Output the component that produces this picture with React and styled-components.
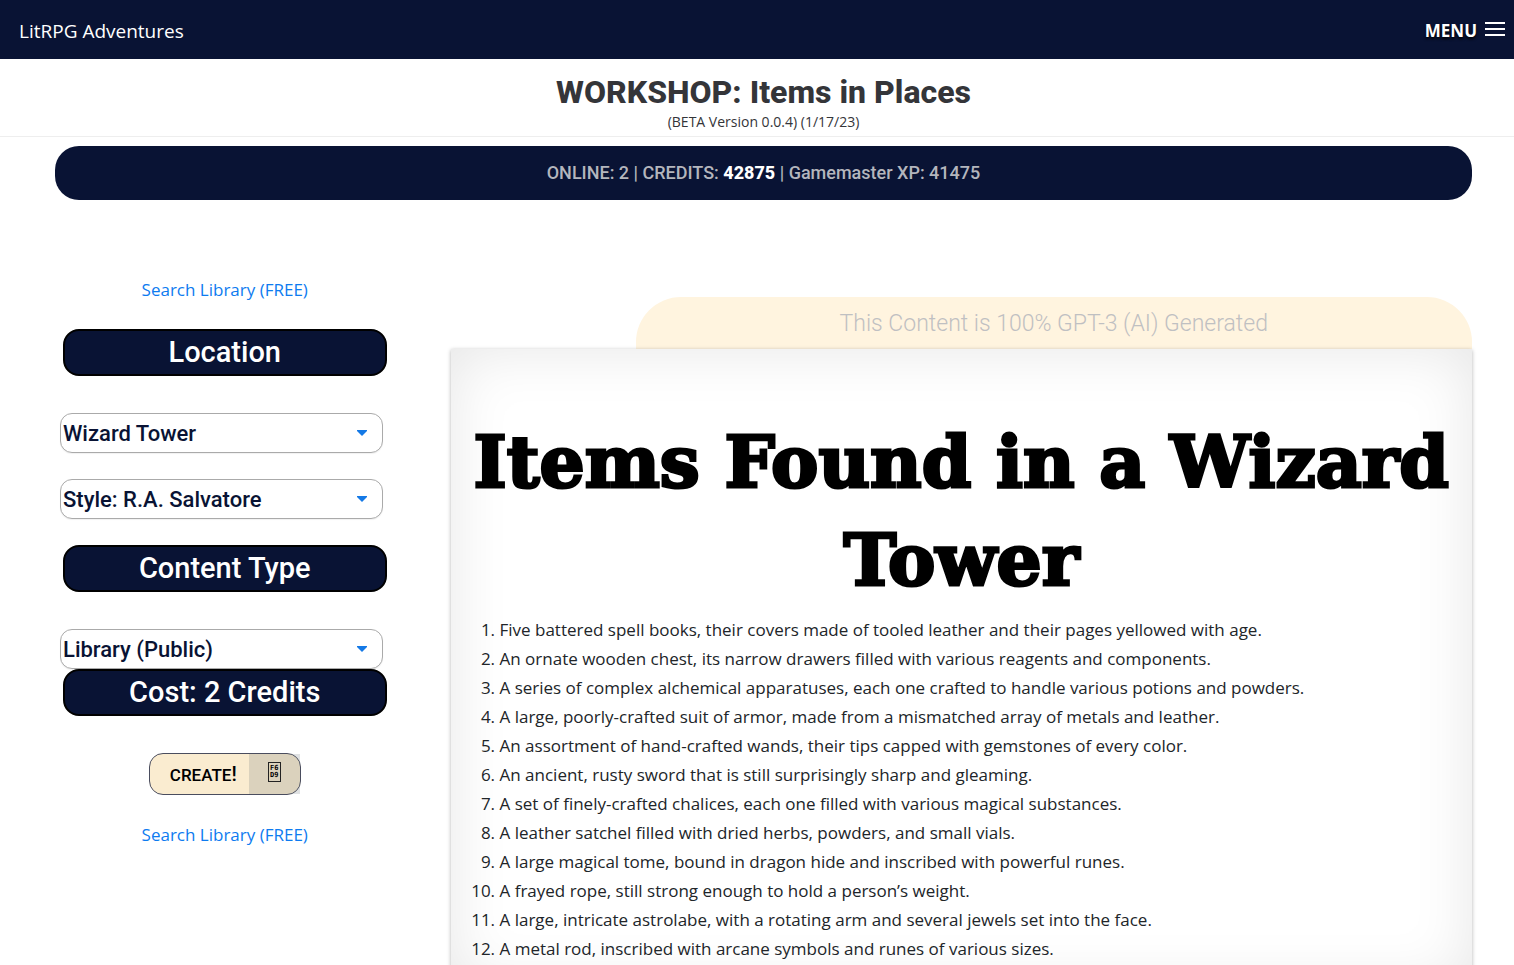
import React, { useState } from 'react';
import styled, { createGlobalStyle } from 'styled-components';

const places = ['Wizard Tower', 'Dungeon', 'Tavern', 'Castle'];
const styles = ['Style: R.A. Salvatore', 'Style: J.R.R. Tolkien', 'Style: H.P. Lovecraft'];
const visibility = ['Library (Public)', 'Private'];

const foundItems = [
  'Five battered spell books, their covers made of tooled leather and their pages yellowed with age.',
  'An ornate wooden chest, its narrow drawers filled with various reagents and components.',
  'A series of complex alchemical apparatuses, each one crafted to handle various potions and powders.',
  'A large, poorly-crafted suit of armor, made from a mismatched array of metals and leather.',
  'An assortment of hand-crafted wands, their tips capped with gemstones of every color.',
  'An ancient, rusty sword that is still surprisingly sharp and gleaming.',
  'A set of finely-crafted chalices, each one filled with various magical substances.',
  'A leather satchel filled with dried herbs, powders, and small vials.',
  'A large magical tome, bound in dragon hide and inscribed with powerful runes.',
  'A frayed rope, still strong enough to hold a person’s weight.',
  'A large, intricate astrolabe, with a rotating arm and several jewels set into the face.',
  'A metal rod, inscribed with arcane symbols and runes of various sizes.',
];

const Dropdown = ({ label, options }) => {
  const [value, setValue] = useState(options[0]);

  return (
    <SelectWrap>
      <Select aria-label={label} value={value} onChange={e => setValue(e.target.value)}>
        {options.map(option => (
          <option key={option}>{option}</option>
        ))}
      </Select>
      <Caret viewBox="0 0 10 6" aria-hidden="true">
        <path d="M0 0h10v1L5 6 0 1z" />
      </Caret>
    </SelectWrap>
  );
};

const App = () => {
  return (
    <>
      <GlobalStyle />
      <NavBar>
        <Brand href="#">LitRPG Adventures</Brand>
        <MenuButton type="button">
          MENU
          <svg width="20" height="14" viewBox="0 0 20 14" aria-hidden="true">
            <path d="M0 1h20M0 7h20M0 13h20" stroke="#fff" strokeWidth="2" />
          </svg>
        </MenuButton>
      </NavBar>

      <PageHeader>
        <PageTitle>WORKSHOP: Items in Places</PageTitle>
        <Version>(BETA Version 0.0.4) (1/17/23)</Version>
      </PageHeader>

      <Content>
        <StatusBar>
          ONLINE: 2 | CREDITS: <strong>42875</strong> | Gamemaster XP: 41475
        </StatusBar>

        <Columns>
          <Sidebar>
            <LibraryLink href="#">Search Library (FREE)</LibraryLink>
            <SectionLabel>Location</SectionLabel>
            <SelectGroup>
              <Dropdown label="Location" options={places} />
              <Dropdown label="Style" options={styles} />
            </SelectGroup>
            <SectionLabel>Content Type</SectionLabel>
            <SelectGroup $flush>
              <Dropdown label="Content Type" options={visibility} />
            </SelectGroup>
            <SectionLabel>Cost: 2 Credits</SectionLabel>
            <CreateButton type="button">
              <CreateText>
                CREATE<span>!</span>
              </CreateText>
              <CreateIcon>
                <GlyphBox>
                  <span>F6</span>
                  <span>D9</span>
                </GlyphBox>
              </CreateIcon>
            </CreateButton>
            <LibraryLink href="#">Search Library (FREE)</LibraryLink>
          </Sidebar>

          <Result>
            <Ribbon>This Content is 100% GPT-3 (AI) Generated</Ribbon>
            <Paper>
              <PaperTitle>Items Found in a Wizard Tower</PaperTitle>
              <ItemList>
                {foundItems.map(item => (
                  <li key={item}>{item}</li>
                ))}
              </ItemList>
            </Paper>
          </Result>
        </Columns>
      </Content>
    </>
  );
};

const GlobalStyle = createGlobalStyle`
  * {
    box-sizing: border-box;
  }

  html {
    scrollbar-width: none;
  }

  body {
    margin: 0;
    background: #fff;
    color: #212529;
    font-family: 'Segoe UI', 'Open Sans', sans-serif;
    font-size: 17px;
  }
`;

const NavBar = styled.nav`
  display: flex;
  align-items: center;
  justify-content: space-between;
  height: 59px;
  padding: 2px 9px 0 19px;
  background: #091334;
`;

const Brand = styled.a`
  color: #fff;
  font-size: 19px;
  line-height: 28px;
  text-decoration: none;
`;

const MenuButton = styled.button`
  display: flex;
  align-items: center;
  gap: 8px;
  padding: 0;
  border: 0;
  background: none;
  color: #fff;
  font-family: inherit;
  font-size: 17px;
  font-weight: 700;
  line-height: 28px;
  text-shadow: 0 2px 3px #000;
  cursor: pointer;

  svg {
    margin-bottom: 4px;
  }
`;

const PageHeader = styled.header`
  padding: 12px 0 5px 13px;
  border-bottom: 1px solid #eee;
  text-align: center;
`;

const PageTitle = styled.h1`
  margin: 0;
  color: #343539;
  font-family: Roboto, sans-serif;
  font-size: 32px;
  font-weight: 800;
  line-height: 42px;
`;

const Version = styled.div`
  color: #343539;
  font-size: 14px;
  line-height: 18px;
`;

const Content = styled.main`
  padding: 9px 42px 0 55px;
`;

const StatusBar = styled.div`
  padding: 13px;
  border-radius: 24px;
  background: #091334;
  color: #b4b6bd;
  font-family: Roboto, sans-serif;
  font-size: 18px;
  font-weight: 500;
  line-height: 28px;
  text-align: center;

  strong {
    color: #fff;
    font-weight: 800;
  }
`;

const Columns = styled.div`
  display: grid;
  grid-template-columns: minmax(0, 1fr) minmax(0, 3fr);
  gap: 55px;
  margin-top: 77px;
`;

const Sidebar = styled.aside`
  display: flex;
  flex-direction: column;
  padding-right: 1px;
`;

const LibraryLink = styled.a`
  align-self: center;
  margin-bottom: 26px;
  color: #0d7bf0;
  line-height: 26px;
  text-decoration: none;
`;

const SectionLabel = styled.h2`
  margin: 0 8px;
  border: 2px solid #000;
  border-radius: 16px;
  background: #091334;
  color: #fff;
  font-family: Roboto, sans-serif;
  font-size: 29px;
  font-weight: 500;
  line-height: 43px;
  text-align: center;
`;

const SelectGroup = styled.div`
  display: flex;
  flex-direction: column;
  gap: 26px;
  margin: 37px 12px ${props => (props.$flush ? '0' : '26px')} 5px;
`;

const SelectWrap = styled.div`
  position: relative;
`;

const Select = styled.select`
  display: block;
  width: 100%;
  height: 40px;
  padding: 0 32px 0 2px;
  border: 1px solid #aaa;
  border-radius: 12px;
  background: #fff;
  box-shadow: 0 1px 1px rgba(0, 0, 0, 0.06);
  color: #091334;
  font-family: Roboto, sans-serif;
  font-size: 22px;
  font-weight: 500;
  appearance: none;
`;

const Caret = styled.svg`
  position: absolute;
  top: 17px;
  right: 16px;
  width: 10px;
  height: 6px;
  fill: #1479e6;
  pointer-events: none;
`;

const CreateButton = styled.button`
  display: flex;
  align-self: center;
  width: 152px;
  height: 42px;
  margin: 37px 0 27px;
  padding: 0;
  border: 1px solid #4a4d5e;
  border-radius: 14px;
  background: #faecd0;
  color: #000;
  font-family: Roboto, sans-serif;
  cursor: pointer;
`;

const CreateText = styled.span`
  flex: 1;
  padding-left: 8px;
  font-size: 17px;
  font-weight: 500;
  line-height: 40px;
  text-align: center;

  span {
    font-size: 20px;
  }
`;

const CreateIcon = styled.span`
  display: flex;
  justify-content: center;
  align-items: center;
  width: 51px;
  padding-bottom: 4px;
  background: rgba(110, 120, 125, 0.22);
`;

const GlyphBox = styled.span`
  display: flex;
  flex-direction: column;
  justify-content: center;
  width: 13px;
  height: 20px;
  border: 1px solid #222;
  font-family: 'DejaVu Sans Mono', monospace;
  font-size: 7px;
  font-weight: 700;
  line-height: 7px;
`;

const Result = styled.section`
  padding-top: 20px;
`;

const Ribbon = styled.div`
  margin-left: 185px;
  padding: 12px 0 10px;
  border-radius: 45px 45px 0 0;
  background: #fff4df;
  color: #bfc0c2;
  font-family: Roboto, sans-serif;
  font-size: 23px;
  font-weight: 300;
  line-height: 30px;
  text-align: center;
`;

const Paper = styled.article`
  position: relative;
  padding: 64px 20px 24px;
  background: #fff;
  box-shadow: 0 1px 4px rgba(0, 0, 0, 0.3), 0 0 60px rgba(0, 0, 0, 0.1) inset;
`;

const PaperTitle = styled.h1`
  margin: 0;
  color: #000;
  font-family: 'DejaVu Serif', serif;
  font-size: 71px;
  font-weight: 700;
  line-height: 98px;
  text-align: center;
  -webkit-text-stroke: 3px #000;
`;

const ItemList = styled.ol`
  margin: 6px 0 0;
  padding-left: 29px;
  line-height: 29px;
`;

export default App;
